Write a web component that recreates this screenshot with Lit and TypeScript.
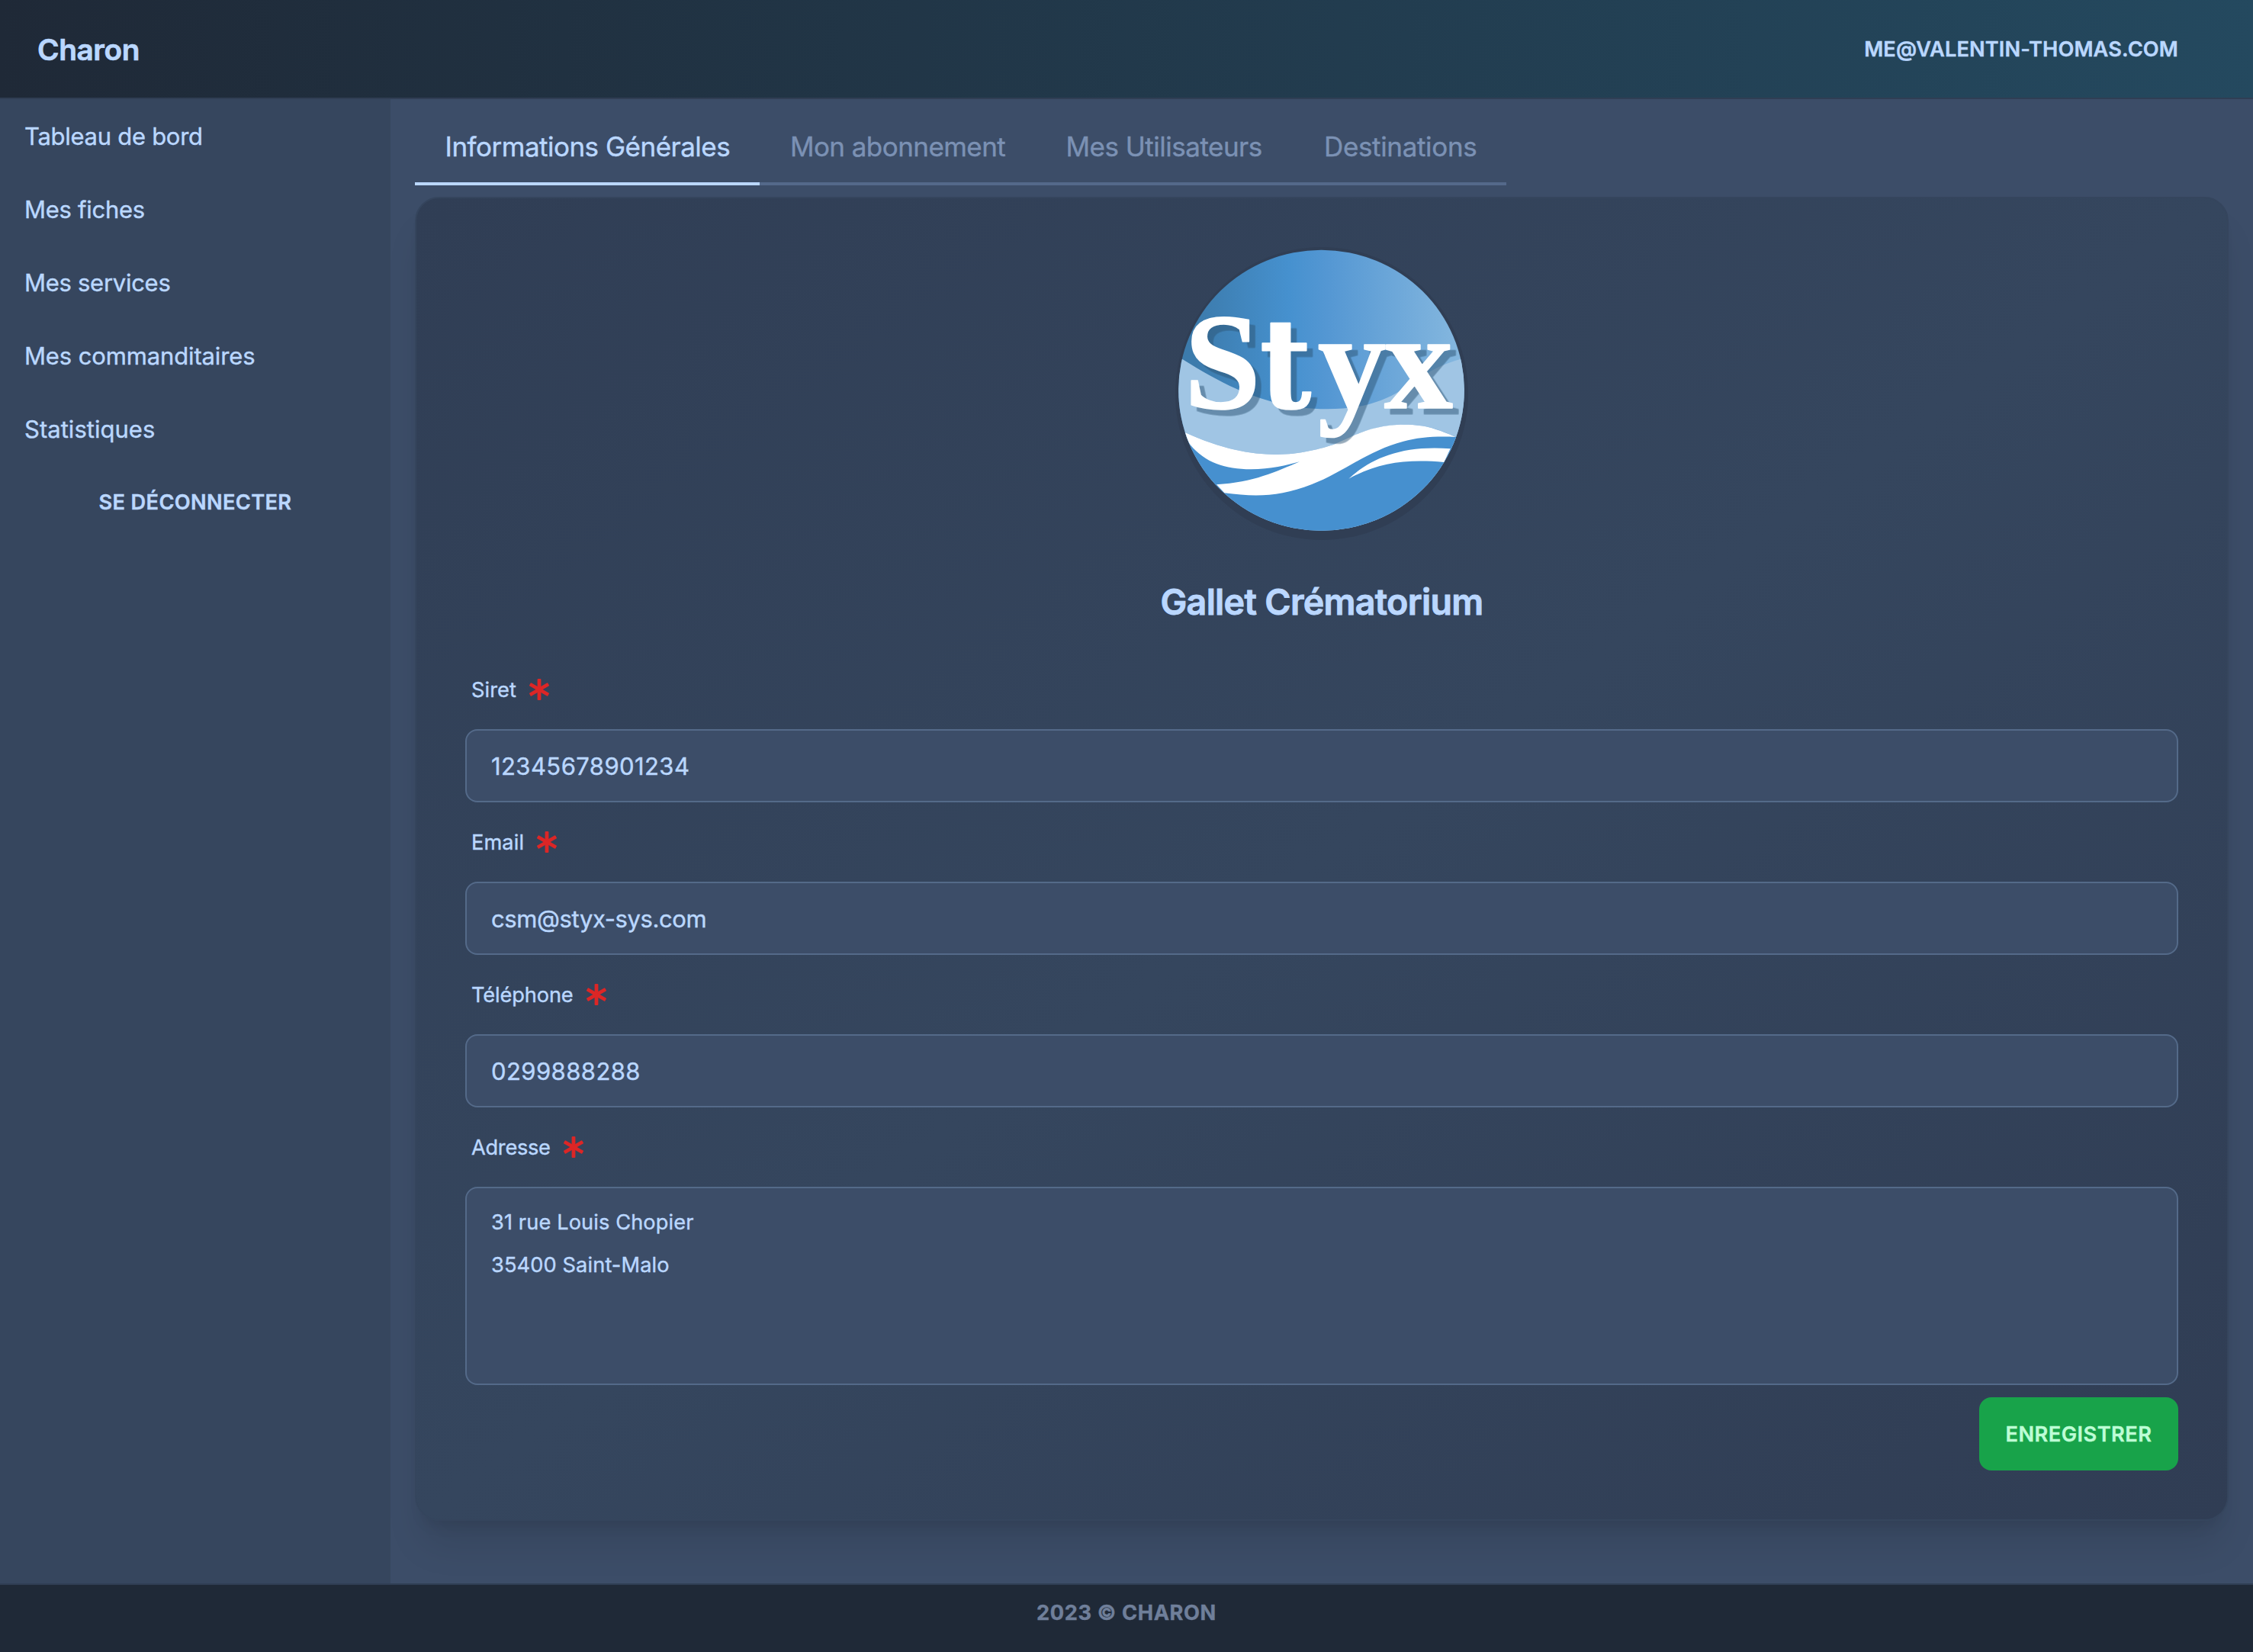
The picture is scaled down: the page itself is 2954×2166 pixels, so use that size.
import { LitElement, html, css, svg } from "lit";
import { customElement, state } from "lit/decorators.js";
import { classMap } from "lit/directives/class-map.js";

interface Field {
  label: string;
  value: string;
  key: string;
}

@customElement("styx-logo")
export class StyxLogo extends LitElement {
  static styles = css`
    :host {
      display: block;
      width: 384px;
      height: 384px;
      border-radius: 50%;
      overflow: hidden;
      background: #303e54;
    }
    svg {
      display: block;
      width: 100%;
      height: 100%;
    }
    .word {
      font-family: "Liberation Serif", serif;
      font-weight: 700;
      font-size: 540px;
      fill: #fff;
      stroke: #fff;
      stroke-width: 5;
      stroke-linejoin: round;
      -webkit-text-stroke: 0;
      filter: drop-shadow(23px 23px 0 rgb(43 84 115 / 0.5));
    }
    .wide {
      font-family: "DejaVu Serif Condensed", "DejaVu Serif", serif;
      font-size: 488px;
      font-stretch: condensed;
    }
  `;

  render() {
    return html`<svg viewBox="123 72 1152 1152" role="img" aria-label="Styx">
      ${svg`
        <defs>
          <linearGradient id="sky" gradientUnits="userSpaceOnUse" x1="135" y1="0" x2="1260" y2="0">
            <stop offset="0.06" stop-color="#3c7bac" />
            <stop offset="0.39" stop-color="#4691cf" />
            <stop offset="0.52" stop-color="#5497d3" />
            <stop offset="1" stop-color="#86b8df" />
          </linearGradient>
          <clipPath id="disc"><ellipse cx="697.5" cy="635" rx="562" ry="552" /></clipPath>
        </defs>
        <g clip-path="url(#disc)">
          <rect x="120" y="72" width="1160" height="1160" fill="url(#sky)" />
          <path fill="#a0c5e4" d="M120 490L150 512C330 625 500 709 720 709C850 709 940 680 1010 635C1100 575 1160 530 1280 505V1290H120Z" />
          <path fill="#4690cf" d="M120 800L163 802C300 865 420 888 520 888C610 888 700 865 750 847C800 828 880 772 1025 770C1110 770 1160 790 1225 818L1290 830V1290H120Z" />
          <path fill="#fff" d="M163 802C300 865 420 888 520 888C610 888 700 865 750 847C820 818 890 770 1025 770C1110 770 1160 790 1226 819C1150 815 1080 820 1020 836C880 872 780 960 660 1005C530 1055 440 1055 316 1039L285 1006C430 998 520 955 612 916C560 930 500 946 420 946C320 946 240 920 182 850L140 792Z" />
          <path fill="#fff" d="M805 983C890 905 1010 850 1205 865L1180 918C1030 905 920 920 805 983Z" />
        </g>
        <text class="word" x="158" y="706">S<tspan class="wide" x="455">t</tspan><tspan x="683">y</tspan><tspan x="945">x</tspan></text>
      `}
    </svg>`;
  }
}

@customElement("required-mark")
export class RequiredMark extends LitElement {
  static styles = css`
    :host {
      display: block;
      width: 28px;
      height: 28px;
    }
    svg {
      display: block;
    }
  `;

  render() {
    return html`<svg width="28" height="28" viewBox="-14 -14 28 28" fill="#dc2626">
      <rect x="-2.4" y="-14" width="4.8" height="28" rx="1" />
      <rect x="-2.4" y="-14" width="4.8" height="28" rx="1" transform="rotate(60)" />
      <rect x="-2.4" y="-14" width="4.8" height="28" rx="1" transform="rotate(120)" />
    </svg>`;
  }
}

@customElement("app-root")
export class AppRoot extends LitElement {
  static styles = css`
    :host {
      display: grid;
      grid-template: 130px 1fr 90px / 512px 1fr;
      height: 100vh;
      box-sizing: border-box;
      background: #3c4d68;
      color: #bad7ff;
      font-family: Inter, "Liberation Sans", sans-serif;
      font-size: 31px;
      -webkit-text-stroke: 0.4px currentColor;
    }
    * {
      box-sizing: border-box;
    }
    header {
      grid-column: 1 / -1;
      display: flex;
      align-items: center;
      justify-content: space-between;
      padding: 0 98px 0 49px;
      border-bottom: 2px solid #303e54;
      background: linear-gradient(90deg, #1f2937, #24495f) padding-box;
    }
    .brand {
      font-size: 38.8px;
      font-weight: 600;
      letter-spacing: -0.42px;
      -webkit-text-stroke-width: 0.7px;
    }
    .account {
      font-size: 27.2px;
      font-weight: 600;
      letter-spacing: 0.12px;
    }
    nav {
      display: flex;
      flex-direction: column;
      background: #36465e;
    }
    .link {
      height: 96px;
      line-height: 97px;
      padding-left: 32px;
      letter-spacing: -0.28px;
    }
    .link:nth-child(4) {
      letter-spacing: -0.13px;
    }
    .link:nth-child(5) {
      letter-spacing: 0.03px;
    }
    .logout {
      height: 96px;
      line-height: 97px;
      text-align: center;
      font-size: 27.2px;
      font-weight: 600;
      letter-spacing: 0.35px;
    }
    main {
      display: flex;
      flex-direction: column;
      align-items: stretch;
      gap: 16px;
      padding: 16px 32px 0;
      overflow: hidden;
    }
    .tabs {
      display: grid;
      grid-template-columns: 452.4px 360.6px 339.5px 278.5px;
      height: 96px;
    }
    .tab {
      border-bottom: 4px solid #54698a;
      padding-left: 39.5px;
      line-height: 93px;
      font-size: 35px;
      white-space: nowrap;
      color: #7b91b4;
      letter-spacing: -0.5px;
    }
    .tab:nth-child(2) {
      letter-spacing: -0.56px;
    }
    .tab:nth-child(3) {
      padding-left: 40.5px;
    }
    .tab:nth-child(4) {
      letter-spacing: -0.34px;
    }
    .tab.active {
      color: #bad7ff;
      border-color: #bad7ff;
    }
    .card {
      display: flex;
      flex-direction: column;
      padding: 64px;
      border: 2px solid #35455d;
      border-radius: 32px;
      background: linear-gradient(to bottom right, #303e55, #35465e 50%, #303d54);
      box-shadow: 0 40px 50px -10px rgb(0 0 0 / 0.1), 0 16px 20px -12px rgb(0 0 0 / 0.1);
    }
    styx-logo {
      align-self: center;
    }
    h2 {
      margin: 49px 0 31px;
      line-height: 64px;
      text-align: center;
      font-size: 46.6px;
      font-weight: 600;
      letter-spacing: -0.7px;
      -webkit-text-stroke-width: 0.9px;
    }
    .label {
      display: flex;
      align-items: center;
      gap: 16.5px;
      height: 104px;
      padding-left: 8px;
      font-size: 27.2px;
    }
    .siret .label {
      letter-spacing: 0.08px;
    }
    .email .label {
      letter-spacing: 0.1px;
      gap: 15.5px;
    }
    .phone .label {
      letter-spacing: -0.12px;
    }
    .address .label {
      letter-spacing: -0.27px;
    }
    .input {
      display: flex;
      align-items: center;
      height: 96px;
      padding: 0 32px;
      border: 2px solid #546a89;
      border-radius: 16px;
      background: #3c4d68;
      letter-spacing: 0.42px;
    }
    .email .input {
      letter-spacing: -0.4px;
    }
    .address .input {
      display: block;
      height: 260px;
      padding: 17px 32px 15px;
      font-size: 27.2px;
      line-height: 56px;
      letter-spacing: 0.12px;
      white-space: pre-line;
    }
    .save {
      align-self: flex-end;
      width: 261px;
      height: 96px;
      margin-top: 16px;
      border: 0;
      border-radius: 16px;
      background: #18a34a;
      color: #bdfdd5;
      font: 600 27.2px Inter, sans-serif;
      letter-spacing: 0.46px;
    }
    footer {
      grid-column: 1 / -1;
      padding-top: 17px;
      border-top: 2px solid #303e54;
      background: #1f2937;
      color: #6f7f9a;
      text-align: center;
      font-size: 27.2px;
      font-weight: 700;
      line-height: 40px;
      letter-spacing: 0.6px;
    }
  `;

  @state() private activeTab = 0;

  private links = ["Tableau de bord", "Mes fiches", "Mes services", "Mes commanditaires", "Statistiques"];
  private tabs = ["Informations Générales", "Mon abonnement", "Mes Utilisateurs", "Destinations"];
  private fields: Field[] = [
    { key: "siret", label: "Siret", value: "12345678901234" },
    { key: "email", label: "Email", value: "csm@styx-sys.com" },
    { key: "phone", label: "Téléphone", value: "0299888288" },
    { key: "address", label: "Adresse", value: "31 rue Louis Chopier\n35400 Saint-Malo" },
  ];

  render() {
    return html`
      <header>
        <div class="brand">Charon</div>
        <div class="account">ME@VALENTIN-THOMAS.COM</div>
      </header>
      <nav>
        ${this.links.map((l) => html`<div class="link">${l}</div>`)}
        <div class="logout">SE DÉCONNECTER</div>
      </nav>
      <main>
        <div class="tabs">
          ${this.tabs.map(
            (t, i) => html`<div
              class=${classMap({ tab: true, active: i === this.activeTab })}
              @click=${() => (this.activeTab = i)}
            >${t}</div>`
          )}
        </div>
        <section class="card">
          <styx-logo></styx-logo>
          <h2>Gallet Crématorium</h2>
          ${this.fields.map(
            (f) => html`<div class=${f.key}>
              <div class="label"><span>${f.label}</span><required-mark></required-mark></div>
              <div class="input">${f.value}</div>
            </div>`
          )}
          <button class="save">ENREGISTRER</button>
        </section>
      </main>
      <footer>2023 © CHARON</footer>
    `;
  }
}
